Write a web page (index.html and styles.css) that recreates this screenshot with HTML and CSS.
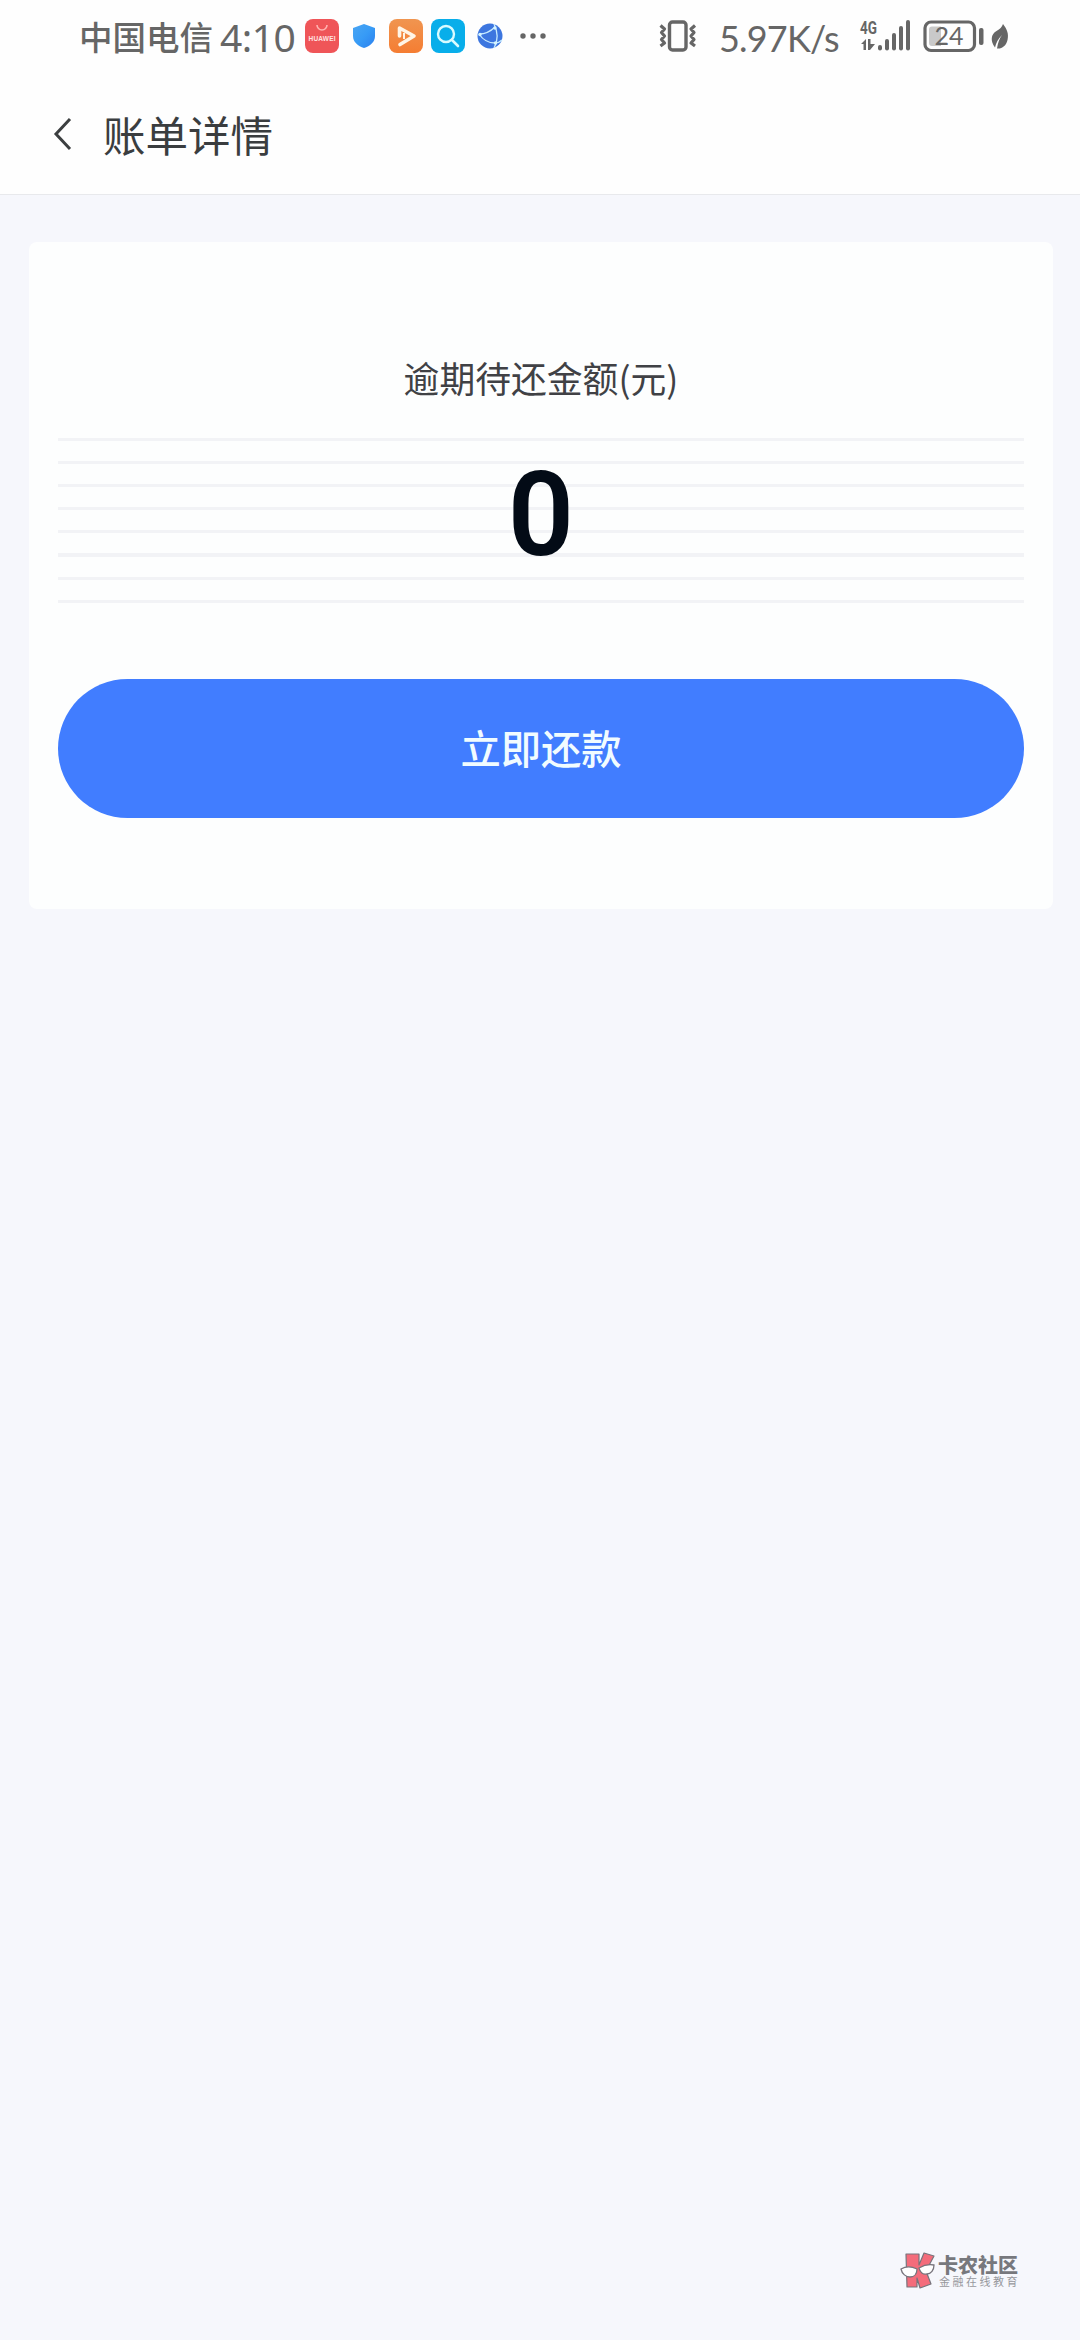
FILE: index.html
```
<!doctype html>
<html lang="zh-CN">
  <head>
    <meta charset="UTF-8" />
    <meta name="viewport" content="width=device-width, initial-scale=1.0" />
    <title>账单详情</title>
    <link rel="stylesheet" href="styles.css" />
  </head>
  <body>
    <div class="status-bar">
      <span class="carrier">中国电信</span>
      <span class="time">4:10</span>
      <div class="app-icons">
        <svg width="34" height="34" viewBox="0 0 34 34">
          <rect width="34" height="34" rx="8" fill="#ef5558" />
          <path d="M12 6a5 5 0 0 0 10 0" fill="none" stroke="#ffb3b0" stroke-width="1.6" />
          <text class="huawei" x="17" y="22" text-anchor="middle" textLength="27">HUAWEI</text>
        </svg>
        <svg class="shield" width="24" height="26" viewBox="0 0 24 26">
          <defs>
            <linearGradient id="shield-fill" x1="0" y1="0" x2="1" y2="1">
              <stop offset="0" stop-color="#4aa5f2" />
              <stop offset=".5" stop-color="#379bf6" />
              <stop offset="1" stop-color="#2b7fee" />
            </linearGradient>
          </defs>
          <path d="M12 1 23 5v8c0 6-5 10-11 12C6 23 1 19 1 13V5z" fill="url(#shield-fill)" />
        </svg>
        <svg width="34" height="34" viewBox="0 0 34 34">
          <defs>
            <linearGradient id="video-fill" x1="0" y1="0" x2="0" y2="1">
              <stop offset="0" stop-color="#f09550" />
              <stop offset="1" stop-color="#f57d32" />
            </linearGradient>
          </defs>
          <rect width="34" height="34" rx="8" fill="url(#video-fill)" />
          <path d="M10.500 17V9L25 17l-14 8.500" fill="none" stroke="#fff5e6" stroke-width="3.600" stroke-linejoin="round" stroke-linecap="round" />
          <path d="M15 14v6" stroke="#fff5e6" stroke-width="2" />
        </svg>
        <svg width="34" height="34" viewBox="0 0 34 34">
          <rect width="34" height="34" rx="8" fill="#08aeea" />
          <circle cx="15" cy="15" r="8" fill="none" stroke="#d9fbff" stroke-width="2.400" />
          <path d="M21 21l6 6" stroke="#d9fbff" stroke-width="2.600" stroke-linecap="round" />
        </svg>
        <svg class="globe" width="26" height="26" viewBox="0 0 26 26">
          <circle cx="13" cy="13" r="12.500" fill="#3d76df" />
          <g fill="none" stroke="#c8ecff" stroke-width="1.300">
            <path d="M17 1c4 8 4 17 0 24M2 11C8 11 14 8 18 4M2 11c4 6 9 9 16 9 3 0 5-1 7-3" />
          </g>
          <circle cx="18" cy="5" r="1.700" fill="#d5f4ff" />
          <circle cx="3" cy="11.500" r="1.700" fill="#d5f4ff" />
          <circle cx="18.500" cy="20" r="1.700" fill="#d5f4ff" />
        </svg>
        <svg class="more" width="26" height="6" viewBox="0 0 26 6" fill="#666">
          <circle cx="3" cy="3" r="2.700" />
          <circle cx="13" cy="3" r="2.700" />
          <circle cx="23" cy="3" r="2.700" />
        </svg>
      </div>
      <svg class="vibrate" width="38" height="32" viewBox="0 0 38 32" fill="none" stroke="#666">
        <rect x="10.500" y="2" width="16.500" height="28" rx="3" stroke-width="3.400" />
        <path d="M1.500 5.500l4 3.500-3 3.500 3 3.500-3 3.500 3 3.500-4 3M36 5.500L32 9l3 3.500-3 3.500 3 3.500-3 3.500 4 3" stroke-width="3.200" stroke-linejoin="round" />
      </svg>
      <span class="speed">5.97K/s</span>
      <svg class="signal" width="52" height="34" viewBox="0 0 52 34" fill="#666">
        <text class="network" x="0" y="15" textLength="17" lengthAdjust="spacingAndGlyphs">4G</text>
        <path d="M1 25l5-5v11H3.500v-6zM8 20h2.500v5H15l-5 6H8z" />
        <rect x="18" y="26" width="4" height="5.500" rx="2" />
        <rect x="25" y="20" width="4" height="11.500" rx="2" />
        <rect x="32" y="14" width="4" height="17.500" rx="2" />
        <rect x="39" y="7" width="4" height="24.500" rx="2" />
        <rect x="46" y="1" width="4" height="30.500" rx="2" />
      </svg>
      <svg class="battery" width="61" height="33" viewBox="0 0 61 33">
        <rect x="2" y="2" width="49.500" height="28.500" rx="6" fill="none" stroke="#666" stroke-width="3.200" />
        <path d="M18 6.500H9a3 3 0 0 0-3 3V23a3 3 0 0 0 3 3h9z" fill="#c9c9c9" />
        <text class="level" x="26" y="25" text-anchor="middle">24</text>
        <rect x="56" y="8" width="4.500" height="17" rx="2" fill="#666" />
      </svg>
      <svg class="leaf" width="18" height="27" viewBox="0 0 18 27">
        <path d="M12 1c4 5 6 10 4.500 16C15 23 11 26 6 25.500c1-6 2.500-10 5-13.500-4 4-6 8-7 12.500C-1 18 0 11 5.500 8 9 6 11 4 12 1z" fill="#666" />
      </svg>
    </div>

    <header class="nav-bar">
      <svg class="back" width="18" height="34" viewBox="0 0 18 34">
        <path d="M16 2L2 17l14 15" fill="none" stroke="#3c3f40" stroke-width="3" />
      </svg>
      <h1>账单详情</h1>
    </header>

    <main>
      <section class="card">
        <h2 class="card-label">逾期待还金额(元)</h2>
        <div class="amount">0</div>
        <button class="pay-button">立即还款</button>
      </section>
    </main>

    <footer class="brand">
      <svg width="36" height="38" viewBox="0 0 36 38">
        <g fill="#f46c7b" stroke="#77747c" stroke-width="1.200" stroke-linejoin="round">
          <path d="M6 2h13v11l5-12 10 3-8 15 5 13-11 4-3-10v9H7z" />
        </g>
        <g fill="#fff" stroke="#77747c" stroke-width="1.300">
          <path d="M1 17c5-3 10-3 16 0 0 5-3 8-7 8s-8-3-9-8z" />
          <path d="M19 16c5-3 10-4 15-3 0 5-3 9-7 9-4 1-7-2-8-6z" />
        </g>
      </svg>
      <div class="brand-text">
        <strong>卡农社区</strong>
        <span>金融在线教育</span>
      </div>
    </footer>
  </body>
</html>
```

FILE: styles.css
```
* {
  margin: 0;
  padding: 0;
  box-sizing: border-box;
}

body {
  display: flex;
  flex-direction: column;
  height: 100vh;
  overflow: hidden;
  background-color: #f6f7fc;
  font-family: "Noto Sans CJK SC", sans-serif;
}

svg {
  display: block;
  flex: none;
  overflow: visible;
}

.status-bar {
  display: flex;
  align-items: center;
  height: 72px;
  padding-left: 79px;
  background-color: #fefefe;
  color: #666;
  line-height: 1;
  white-space: nowrap;
}

.carrier {
  width: 141px;
  font-size: 33.5px;
  font-weight: 500;
}

.time {
  width: 85px;
  font-family: "Noto Sans", sans-serif;
  font-size: 39px;
  letter-spacing: -0.5px;
}

.app-icons {
  display: flex;
  align-items: center;
  width: 354px;
}

.shield {
  margin: 0 13px;
}

.app-icons svg:nth-child(4) {
  margin-left: 8px;
}

.globe {
  margin: 0 17px 0 12px;
}

.huawei {
  fill: #ffe3e0;
  font: 700 6.5px "Liberation Sans", sans-serif;
}

.speed {
  width: 141px;
  margin-left: 22px;
  padding-top: 4px;
  font-family: Lato, sans-serif;
  font-size: 36px;
  letter-spacing: -0.8px;
}

.signal {
  margin-right: 11px;
}

.network {
  font: 700 18px Roboto, sans-serif;
}

.level {
  fill: #666;
  font: 25px Lato, sans-serif;
}

.leaf {
  margin-left: 7px;
}

.nav-bar {
  display: flex;
  align-items: center;
  height: 123px;
  padding: 2px 0 0 54px;
  background-color: #fefefe;
  border-bottom: 1px solid #e8e9ec;
}

.nav-bar h1 {
  margin-left: 31px;
  color: #3a3d3f;
  font-size: 42.5px;
  font-weight: 400;
  line-height: 1;
}

main {
  flex: 1;
  padding: 47px 27px 0 29px;
}

.card {
  height: 667px;
  padding: 112px 29px 0;
  background-color: #fdfefe;
  border-radius: 8px;
  text-align: center;
}

.card-label {
  height: 84px;
  color: #404145;
  font-size: 35.8px;
  font-weight: 400;
  line-height: 46px;
}

.amount {
  height: 165px;
  background: repeating-linear-gradient(#f2f3f6 0 3px, transparent 3px 23.1px);
  color: #030b16;
  font-family: Roboto, sans-serif;
  font-size: 116px;
  font-weight: 600;
  line-height: 155px;
}

.pay-button {
  display: block;
  width: 100%;
  height: 139px;
  margin-top: 76px;
  padding-bottom: 4px;
  border: none;
  border-radius: 70px;
  background-color: #417dff;
  color: #f1fcff;
  font-family: inherit;
  font-size: 40.3px;
  font-weight: 500;
}

.brand {
  display: flex;
  align-items: center;
  align-self: flex-end;
  gap: 2px;
  margin: 0 60px 50px 0;
}

.brand-text {
  display: flex;
  flex-direction: column;
  line-height: 1;
}

.brand-text strong {
  color: #77787d;
  font-size: 20px;
  font-weight: 900;
}

.brand-text span {
  margin-top: 1px;
  padding-left: 1px;
  color: #96979d;
  font-size: 11px;
  letter-spacing: 2.5px;
}
```
